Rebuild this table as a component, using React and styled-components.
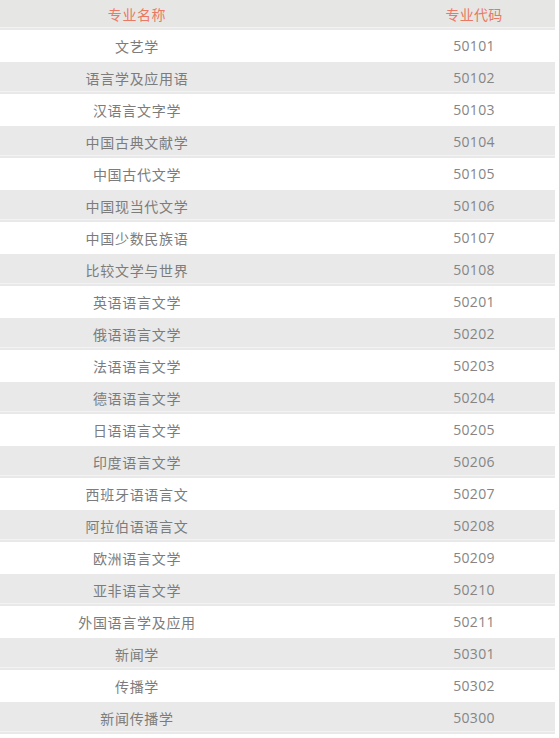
import styled, { createGlobalStyle } from "styled-components";

const GlobalStyle = createGlobalStyle`
  html, body {
    margin: 0;
    padding: 0;
    background: #ffffff;
  }
  body {
    font-family: "Noto Sans CJK SC", "Noto Sans", sans-serif;
  }
`;

const majors = [
  ["文艺学", "50101"],
  ["语言学及应用语", "50102"],
  ["汉语言文字学", "50103"],
  ["中国古典文献学", "50104"],
  ["中国古代文学", "50105"],
  ["中国现当代文学", "50106"],
  ["中国少数民族语", "50107"],
  ["比较文学与世界", "50108"],
  ["英语语言文学", "50201"],
  ["俄语语言文学", "50202"],
  ["法语语言文学", "50203"],
  ["德语语言文学", "50204"],
  ["日语语言文学", "50205"],
  ["印度语言文学", "50206"],
  ["西班牙语语言文", "50207"],
  ["阿拉伯语语言文", "50208"],
  ["欧洲语言文学", "50209"],
  ["亚非语言文学", "50210"],
  ["外国语言学及应用", "50211"],
  ["新闻学", "50301"],
  ["传播学", "50302"],
  ["新闻传播学", "50300"],
];

const Table = styled.div`
  width: 555px;
  display: flex;
  flex-direction: column;
`;

const Row = styled.div`
  display: grid;
  grid-template-columns: 274px 1fr 162px;
  align-items: center;
  height: ${(p) => (p.$header ? 30 : 32)}px;
  background: ${(p) => (p.$header ? "#e6e7e5" : p.$shaded ? "#e9e9e9" : "#ffffff")};
  box-shadow: ${(p) =>
    p.$header || p.$shaded
      ? "inset 0 -2px 0 #e9e9e9, inset 0 -3px 0 #f3f3f3"
      : "none"};
`;

const Cell = styled.div`
  text-align: center;
  font-size: 14px;
  line-height: 1;
  letter-spacing: ${(p) => (p.$header ? 0.6 : 0.7)}px;
  color: ${(p) => (p.$header ? "#ea7862" : "#7c7c7c")};
  font-weight: 400;
  padding-bottom: ${(p) => (p.$header ? 2 : 1)}px;
`;

const Code = styled(Cell)`
  letter-spacing: 0.3px;
  color: ${(p) => (p.$header ? "#ea7862" : "#858585")};
  font-family: ${(p) =>
    p.$header ? `"Noto Sans CJK SC", sans-serif` : `"Open Sans", "Noto Sans", sans-serif`};
`;

export default function App() {
  return (
    <>
      <GlobalStyle />
      <Table>
        <Row $header>
          <Cell $header>专业名称</Cell>
          <span />
          <Code $header>专业代码</Code>
        </Row>
        {majors.map(([name, code], i) => (
          <Row key={code} $shaded={i % 2 === 1}>
            <Cell>{name}</Cell>
            <span />
            <Code>{code}</Code>
          </Row>
        ))}
      </Table>
    </>
  );
}
